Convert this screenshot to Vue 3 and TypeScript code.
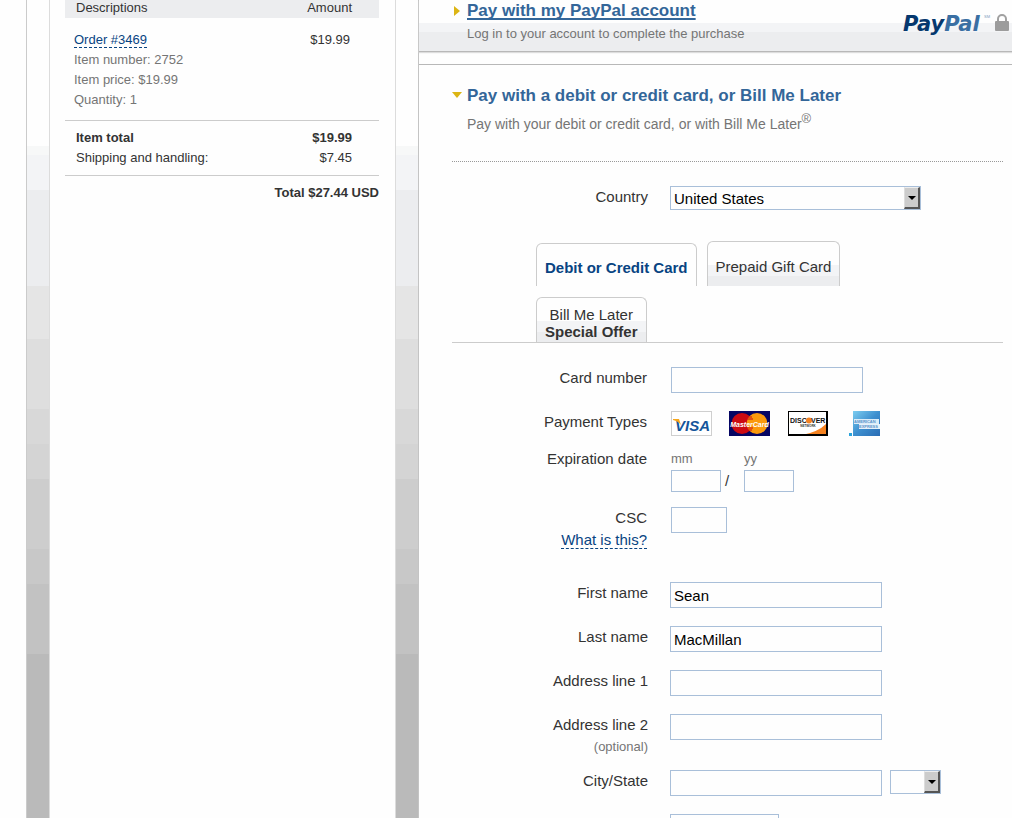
<script setup lang="ts">
import { reactive, ref } from 'vue'

interface TextField {
  id: string
  label: string
  note?: string
}

const country = ref('United States')
const state = ref('')
const activeTab = ref('card')
const card = reactive({ number: '', month: '', year: '', csc: '' })

const nameFields: TextField[] = [
  { id: 'first', label: 'First name' },
  { id: 'last', label: 'Last name' },
  { id: 'address1', label: 'Address line 1' },
  { id: 'address2', label: 'Address line 2', note: '(optional)' },
]

const payer = reactive<Record<string, string>>({
  first: 'Sean',
  last: 'MacMillan',
  address1: '',
  address2: '',
  city: '',
  zip: '',
})
</script>

<template>
  <div class="page">
    <aside class="summary">
      <table class="order">
        <thead>
          <tr>
            <th scope="col">Descriptions</th>
            <th scope="col" class="amount">Amount</th>
          </tr>
        </thead>
        <tbody class="items">
          <tr>
            <td>
              <a class="dashed" href="#order">Order #3469</a>
              <div class="muted">Item number: 2752</div>
              <div class="muted">Item price: $19.99</div>
              <div class="muted">Quantity: 1</div>
            </td>
            <td class="amount">$19.99</td>
          </tr>
        </tbody>
        <tbody class="subtotals">
          <tr class="strong">
            <td>Item total</td>
            <td class="amount">$19.99</td>
          </tr>
          <tr>
            <td>Shipping and handling:</td>
            <td class="amount">$7.45</td>
          </tr>
        </tbody>
        <tfoot>
          <tr>
            <td colspan="2">Total $27.44 USD</td>
          </tr>
        </tfoot>
      </table>
    </aside>

    <main class="checkout">
      <section class="login">
        <div>
          <h2 class="title">
            <svg class="arrow" viewBox="0 0 10 10" aria-hidden="true"><path d="M2 0 L8 5 L2 10 Z" /></svg>
            <a href="#login">Pay with my PayPal account</a>
          </h2>
          <p class="hint">Log in to your account to complete the purchase</p>
        </div>
        <div class="brand">
          <svg class="logo" viewBox="0 0 90 26" role="img" aria-label="PayPal">
            <text x="0" y="17" class="logo-dark">Pay<tspan class="logo-light">Pal</tspan></text>
            <text x="81" y="4" class="logo-mark">SM</text>
          </svg>
          <svg class="lock" viewBox="0 0 14 17" aria-hidden="true">
            <path d="M3 9 V5 a4 4 0 0 1 8 0 V9" fill="none" stroke="#a0a0a0" stroke-width="2" />
            <rect x="0" y="7" width="14" height="10" rx="1" fill="#9c9c9c" />
          </svg>
        </div>
      </section>

      <section class="pay">
        <h2 class="title">
          <svg class="arrow" viewBox="0 0 10 10" aria-hidden="true"><path d="M0 1 H10 L5 7 Z" /></svg>
          <span>Pay with a debit or credit card, or Bill Me Later</span>
        </h2>
        <p class="intro">Pay with your debit or credit card, or with Bill Me Later<sup>®</sup></p>

        <form class="form" @submit.prevent>
          <div class="row country-row">
            <label for="country">Country</label>
            <span class="select country">
              <select id="country" v-model="country">
                <option>United States</option>
                <option>Canada</option>
              </select>
              <span class="drop" aria-hidden="true"><i></i></span>
            </span>
          </div>

          <div class="tabs">
            <button type="button" class="tab" :class="{ active: activeTab === 'card' }" @click="activeTab = 'card'">
              Debit or Credit Card
            </button>
            <button type="button" class="tab" :class="{ active: activeTab === 'gift' }" @click="activeTab = 'gift'">
              Prepaid Gift Card
            </button>
            <button type="button" class="tab" :class="{ active: activeTab === 'later' }" @click="activeTab = 'later'">
              Bill Me Later<br /><b>Special Offer</b>
            </button>
          </div>

          <div class="card-fields">
            <div class="row">
              <label for="number">Card number</label>
              <input id="number" v-model="card.number" class="number" type="text" />
            </div>

            <div class="row types-row">
              <span class="label">Payment Types</span>
              <div class="types">
                <svg width="41" height="25" viewBox="0 0 41 25" role="img" aria-label="Visa">
                  <rect x="0.5" y="0.5" width="40" height="24" fill="#fff" stroke="#cfcfcf" />
                  <text x="4" y="20" class="visa">VISA</text>
                  <path d="M2 8 H8 L10 14 Q7 10 2 9 Z" fill="#f6a61c" />
                </svg>
                <svg width="41" height="25" viewBox="0 0 41 25" role="img" aria-label="MasterCard">
                  <rect width="41" height="25" fill="#060663" />
                  <circle cx="13" cy="12.5" r="10.5" fill="#cc0a12" />
                  <circle cx="28" cy="12.5" r="10.5" fill="#fb9a0c" />
                  <path d="M18 8 H24 M18 17 H24 M19 19 H23 M19 6 H23" stroke="#cc0a12" />
                  <text x="20.5" y="15.5" text-anchor="middle" class="master">MasterCard</text>
                </svg>
                <svg width="41" height="25" viewBox="0 0 41 25" role="img" aria-label="Discover">
                  <rect x="1.5" y="0.5" width="39" height="24" fill="#fff" stroke="#000" />
                  <path d="M15 24 Q31 21 39 13 V24 Z" fill="#f58220" />
                  <path d="M1 24 H40 M40 1 V25" stroke="#000" stroke-width="2" />
                  <text x="3" y="12" class="discover">DISC</text>
                  <circle cx="22" cy="9.5" r="3" fill="#f58220" />
                  <text x="24" y="12" class="discover">VER</text>
                  <text x="21" y="16" text-anchor="middle" class="network">NETWORK</text>
                </svg>
                <svg class="amex" width="31" height="25" viewBox="0 0 31 25" role="img" aria-label="American Express">
                  <defs>
                    <linearGradient id="amex-fill" x1="0" y1="0" x2="1" y2="1">
                      <stop offset="0" stop-color="#7ccdf0" />
                      <stop offset="0.5" stop-color="#3d8fcf" />
                      <stop offset="1" stop-color="#2a6cb4" />
                    </linearGradient>
                  </defs>
                  <rect x="4" width="27" height="25" fill="url(#amex-fill)" />
                  <rect x="0" y="22" width="3" height="3" fill="#2aa3dc" />
                  <rect x="5" y="8" width="25" height="5" fill="#dbecf8" />
                  <rect x="10" y="13" width="21" height="5" fill="#e6f2fa" />
                  <text x="5" y="12" class="amex-text">AMERICAN</text>
                  <text x="10" y="17" class="amex-text">EXPRESS</text>
                </svg>
              </div>
            </div>

            <div class="row expiry-row">
              <span id="expiry" class="label">Expiration date</span>
              <div class="expiry" role="group" aria-labelledby="expiry">
                <label class="part">
                  <span>mm</span>
                  <input v-model="card.month" type="text" />
                </label>
                <span class="slash">/</span>
                <label class="part">
                  <span>yy</span>
                  <input v-model="card.year" type="text" />
                </label>
              </div>
            </div>

            <div class="row csc-row">
              <div class="label">
                <label for="csc">CSC</label><br />
                <a class="dashed" href="#csc">What is this?</a>
              </div>
              <input id="csc" v-model="card.csc" class="csc" type="text" />
            </div>
          </div>

          <div v-for="field in nameFields" :key="field.id" class="row" :class="{ noted: field.note }">
            <label :for="field.id">{{ field.label }}<span v-if="field.note" class="note">{{ field.note }}</span></label>
            <input :id="field.id" v-model="payer[field.id]" class="wide" type="text" />
          </div>

          <div class="row">
            <label for="city">City/State</label>
            <div class="city">
              <input id="city" v-model="payer.city" class="wide" type="text" />
              <span class="select state">
                <select v-model="state" aria-label="State">
                  <option value=""></option>
                  <option>CA</option>
                  <option>NY</option>
                </select>
                <span class="drop" aria-hidden="true"><i></i></span>
              </span>
            </div>
          </div>

          <div class="row">
            <span></span>
            <input v-model="payer.zip" class="zip" type="text" aria-label="ZIP code" />
          </div>
        </form>
      </section>
    </main>
  </div>
</template>

<style>
body {
  margin: 0;
  background: #fefefe;
}
</style>

<style scoped>
* {
  box-sizing: border-box;
}

.page {
  display: flex;
  gap: 22px;
  height: 100vh;
  overflow: hidden;
  margin-left: 26px;
  padding-left: 22px;
  border-left: 1px solid #cbcbcb;
  color: #333;
  font: 13px/20px "Liberation Sans", Arial, sans-serif;
  background: linear-gradient(
    #fefefe 146px,
    #f7f8f8 146px 155px,
    #f3f4f6 155px 190px,
    #ecedef 190px 286px,
    #e5e5e5 286px 339px,
    #dedede 339px 409px,
    #d8d8d8 409px 444px,
    #d4d4d4 444px 479px,
    #cdcdcd 479px 549px,
    #c8c8c8 549px 584px,
    #c2c2c2 584px 654px,
    #bababa 654px
  );
}

.summary {
  flex: 0 0 347px;
  padding: 0 16px 0 15px;
  border: solid #dcdcdc;
  border-width: 0 1px;
  background: #fefefe;
}

.order {
  width: 100%;
  border-collapse: separate;
  border-spacing: 0;
}

.order th {
  padding: 0 27px 3px 11px;
  font-weight: normal;
  line-height: 15px;
  text-align: left;
  background: #ecedef;
}

.order td {
  padding: 0 27px 0 11px;
  vertical-align: top;
}

.order .amount {
  padding-left: 0;
  text-align: right;
}

.order .items td {
  padding: 12px 29px 10px 9px;
}

.subtotals tr:first-child td {
  padding-top: 7px;
  border-top: 1px solid #ccc;
}

.subtotals tr:last-child td {
  padding-bottom: 7px;
  border-bottom: 1px solid #ccc;
}

.strong,
.order tfoot {
  font-weight: bold;
}

.order tfoot td {
  padding: 7px 0 0;
  text-align: right;
}

.muted,
.hint,
.intro,
.note {
  color: #757575;
}

.dashed {
  color: #084482;
  text-decoration: none;
  border-bottom: 1px dashed #084482;
}

.checkout {
  flex: 1;
  min-width: 0;
  border-left: 1px solid #c4c4c4;
  background: #fefefe;
}

.login {
  display: flex;
  justify-content: space-between;
  padding: 0 3px 7px 33px;
  border-bottom: 1px solid #b8b8b8;
  box-shadow: 0 1px 1px #ddd;
  background: linear-gradient(#fefefe 23px, #f3f4f6 23px 32px, #ecedef 32px);
}

.title {
  display: flex;
  align-items: center;
  gap: 5px;
  margin: 0;
  color: #336699;
  font-size: 17px;
  line-height: 22px;
}

.title a {
  color: #336699;
  text-decoration: underline;
  text-decoration-thickness: 2px;
  text-decoration-skip-ink: none;
  text-underline-offset: 2px;
}

.arrow {
  width: 10px;
  height: 10px;
  fill: #dcb514;
}

.hint {
  margin: 2px 0 0 15px;
}

.brand {
  display: flex;
  gap: 2px;
  padding-top: 14px;
}

.logo {
  width: 90px;
  height: 26px;
  overflow: visible;
}

.logo-dark {
  fill: #06386e;
  font: italic bold 21px "DejaVu Sans", sans-serif;
}

.logo-light {
  fill: #3a6fa3;
}

.logo-mark {
  fill: #7d9cbd;
  font: 4px "Liberation Sans", sans-serif;
}

.lock {
  width: 14px;
  height: 17px;
}

.pay {
  margin-top: 12px;
  padding: 20px 9px 0 33px;
  border-top: 1px solid #b8b8b8;
}

.intro {
  margin: 6px 0 0 15px;
  font-size: 14px;
  line-height: 22px;
}

.intro sup {
  font-size: 13px;
  line-height: 0;
}

.form {
  margin-top: 26px;
  padding-top: 24px;
  border-top: 1px dotted #999;
}

.row {
  display: grid;
  grid-template-columns: 196px minmax(0, 1fr);
  gap: 22px;
  align-items: start;
  min-height: 44px;
  font-size: 15px;
  line-height: 22px;
}

.card-fields .row {
  grid-template-columns: 195px minmax(0, 1fr);
  gap: 24px;
}

.row > label,
.row > .label {
  text-align: right;
}

.row.country-row {
  min-height: 55px;
}

.row.types-row {
  min-height: 37px;
}

.row.expiry-row {
  min-height: 59px;
}

.row.csc-row {
  min-height: 75px;
}

.row.noted {
  min-height: 56px;
}

.note {
  display: block;
  font-size: 13px;
}

input,
select {
  height: 26px;
  margin: 0;
  padding: 0 3px;
  border: 1px solid #a9bfd9;
  border-radius: 0;
  outline: none;
  color: #000;
  background: #fefefe;
  font: 15px "Liberation Sans", Arial, sans-serif;
}

.number {
  width: 192px;
}

.csc {
  width: 56px;
}

.wide {
  width: 212px;
}

.zip {
  width: 109px;
}

.select {
  position: relative;
  display: block;
  height: 24px;
}

.country {
  width: 251px;
}

.state {
  width: 51px;
}

select {
  display: block;
  width: 100%;
  height: 24px;
  appearance: none;
}

.drop {
  position: absolute;
  top: 1px;
  right: 1px;
  bottom: 1px;
  display: grid;
  place-items: center;
  width: 16px;
  border: solid;
  border-width: 1px 2px 2px 1px;
  border-color: #eee #555 #555 #ddd;
  background: #ccc;
  pointer-events: none;
}

.drop i {
  border: 4px solid transparent;
  border-top-color: #000;
  border-bottom: 0;
}

.tabs {
  display: flex;
  flex-wrap: wrap;
  align-items: flex-end;
  gap: 11px 10px;
  margin-bottom: 24px;
  padding: 0 120px 0 84px;
  border-bottom: 1px solid #ccc;
}

.tab {
  height: 45px;
  padding: 5px 8px 0;
  border: 1px solid #ccc;
  border-bottom: 0;
  border-radius: 6px 6px 0 0;
  color: #333;
  background: linear-gradient(#fefefe 23px, #f3f4f6 23px 34px, #ecedef 34px);
  font: 15px/17px "Liberation Sans", Arial, sans-serif;
}

.tab.active {
  height: 43px;
  padding-top: 4px;
  color: #084482;
  font-weight: bold;
  background: #fefefe;
}

.types {
  display: flex;
  gap: 17px;
}

.amex {
  margin-left: 4px;
}

.visa {
  fill: #15559a;
  font: italic bold 15px "Liberation Sans", sans-serif;
}

.master {
  fill: #fff;
  font: italic bold 7px "Liberation Sans", sans-serif;
}

.discover {
  fill: #111;
  font: bold 7px "Liberation Sans", sans-serif;
}

.network {
  fill: #333;
  font: bold 3px "Liberation Sans", sans-serif;
}

.amex-text {
  fill: #5a95cb;
  font: bold 4px "Liberation Sans", sans-serif;
}

.expiry {
  display: flex;
  align-items: flex-end;
}

.part {
  display: flex;
  flex-direction: column;
  color: #757575;
  font-size: 13px;
}

.part input {
  width: 50px;
  height: 22px;
}

.slash {
  width: 23px;
  padding-left: 4px;
}

.city {
  display: flex;
  gap: 8px;
}
</style>
